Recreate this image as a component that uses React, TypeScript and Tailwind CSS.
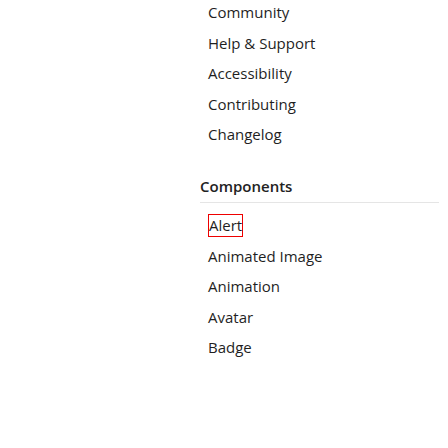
import React from "react";

const top = ["Community", "Help & Support", "Accessibility", "Contributing", "Changelog"];
const comps = ["Animated Image", "Animation", "Avatar", "Badge"];

export default function App() {
  return (
    <div className="w-[448px] h-[448px] bg-white overflow-hidden" style={{ fontFamily: '"Open Sans", "Noto Sans", sans-serif' }}>
      <div className="pl-[200px] pr-[9px] -mt-[3px]">
        <ul className="pl-2">
          {top.map((t) => (
            <li key={t} className="text-[15px] leading-[30.5px] text-[#1f1f1f]">{t}</li>
          ))}
        </ul>
        <div className="mt-[26.5px] text-[15px] leading-5 font-semibold text-[#222] pb-[6px] border-b border-[#e5e5e5]">
          Components
        </div>
        <ul className="pl-2 mt-[7px]">
          <li className="text-[15px] leading-[30.5px] text-[#1f1f1f]">
            <span className="inline-block border border-[#ee0000] leading-[21px]">Alert</span>
          </li>
          {comps.map((t) => (
            <li key={t} className="text-[15px] leading-[30.5px] text-[#1f1f1f]">{t}</li>
          ))}
        </ul>
      </div>
    </div>
  );
}
